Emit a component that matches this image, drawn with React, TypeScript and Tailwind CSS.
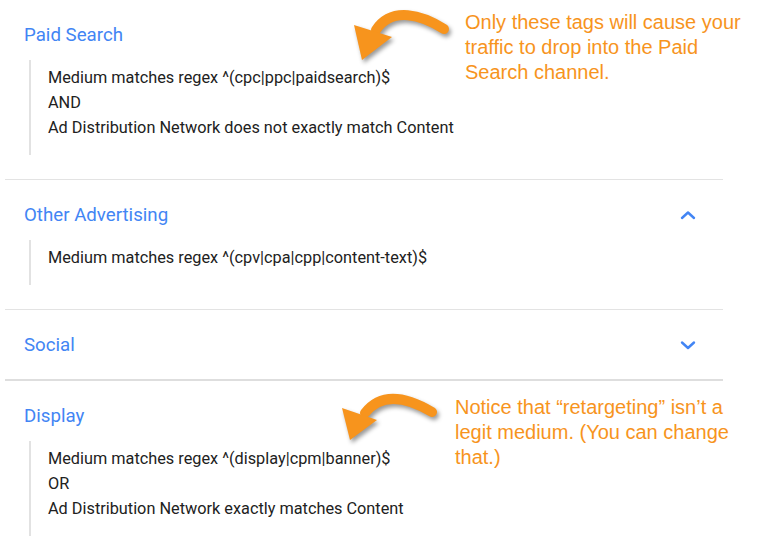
const sections = [
  {
    title: "Paid Search",
    lines: [
      "Medium matches regex ^(cpc|ppc|paidsearch)$",
      "AND",
      "Ad Distribution Network does not exactly match Content",
    ],
  },
  {
    title: "Other Advertising",
    chevron: "up",
    lines: ["Medium matches regex ^(cpv|cpa|cpp|content-text)$"],
  },
  { title: "Social", chevron: "down", lines: [] as string[] },
  {
    title: "Display",
    lines: [
      "Medium matches regex ^(display|cpm|banner)$",
      "OR",
      "Ad Distribution Network exactly matches Content",
    ],
  },
];

function Chevron({ dir }: { dir: string }) {
  return (
    <svg width="16" height="10" viewBox="0 0 16 10" className="mr-[27px]">
      <polyline
        points={dir === "up" ? "2,8 8,2.5 14,8" : "2,2.5 8,8 14,2.5"}
        fill="none"
        stroke="#4285f4"
        strokeWidth="2.4"
        strokeLinecap="round"
        strokeLinejoin="round"
      />
    </svg>
  );
}

function Arrow({ shaft, head }: { shaft: string; head: string }) {
  return (
    <svg width="120" height="75" viewBox="0 0 120 75" className="shrink-0 drop-shadow-[2px_3px_2px_rgba(0,0,0,0.4)]">
      <path d={shaft} fill="none" stroke="#f7941d" strokeWidth="10" strokeLinecap="round" />
      <polygon points={head} fill="#f7941d" />
    </svg>
  );
}

// callout: orange arrow + note, laid over the list
function Callout({
  className,
  gap,
  shaft,
  head,
  text,
}: {
  className: string;
  gap: string;
  shaft: string;
  head: string;
  text: string;
}) {
  return (
    <div className={`absolute flex items-start ${gap} ${className}`}>
      <Arrow shaft={shaft} head={head} />
      <p className="mt-[10px] w-[285px] font-['Liberation_Sans',Arial,sans-serif] text-[20px] leading-[25px] text-[#f7941d]">
        {text}
      </p>
    </div>
  );
}

export default function App() {
  return (
    <div className="relative h-[553px] w-[762px] overflow-hidden bg-white font-['Roboto',sans-serif]">
      <div className="ml-[5px] w-[718px]">
        {sections.map((s, i) => (
          <div
            key={s.title}
            className={`pl-[19px] pt-6 ${
              i === 0 ? "" : i === 3 ? "border-t-2 border-[#dedede]" : "border-t border-[#e3e3e3]"
            } ${s.lines.length ? "pb-6" : "pb-[23px]"}`}
          >
            <div className="flex h-[22px] items-center justify-between">
              <span className="text-[18.7px] leading-[22px] text-[#4285f4]">{s.title}</span>
              {s.chevron && <Chevron dir={s.chevron} />}
            </div>
            {s.lines.length > 0 && (
              <div className="ml-[5px] mt-[14px] border-l-2 border-[#e2e2e2] pb-[15px] pl-[17px] pt-[5px]">
                {s.lines.map((l) => (
                  <div key={l} className="text-[16.3px] leading-[25px] text-[#212121]">
                    {l}
                  </div>
                ))}
              </div>
            )}
          </div>
        ))}
      </div>

      <Callout
        className="left-[340px] top-0"
        gap="gap-[5px]"
        shaft="M104 29 C 82 15, 52 6, 36 30"
        head="22,60 14,25 52,37"
        text="Only these tags will cause your traffic to drop into the Paid Search channel."
      />
      <Callout
        className="left-[335px] top-[385px]"
        gap="gap-0"
        shaft="M97 27 C 75 14, 48 5, 30 28"
        head="15,55 7,23 42,35"
        text="Notice that “retargeting” isn’t a legit medium. (You can change that.)"
      />
    </div>
  );
}
